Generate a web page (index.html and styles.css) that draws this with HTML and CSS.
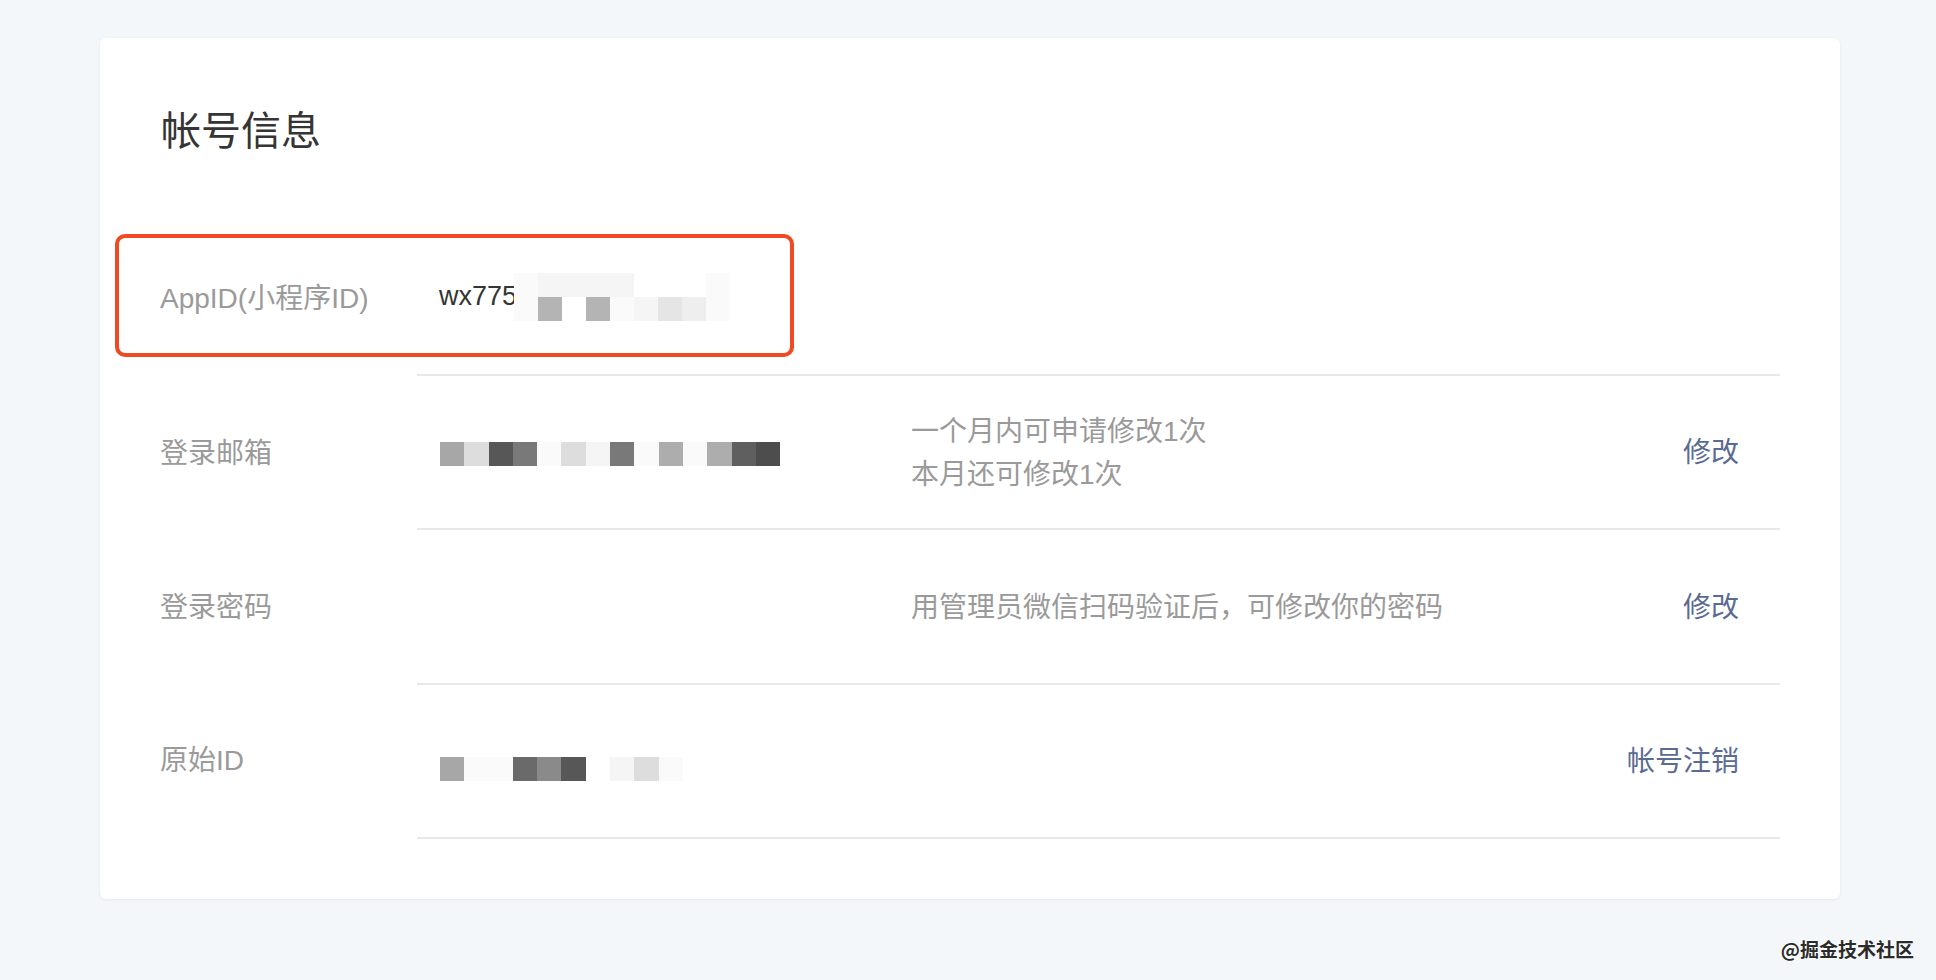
FILE: index.html
```html
<!DOCTYPE html>
<html lang="zh-CN">
<head>
<meta charset="utf-8">
<title>帐号信息</title>
<link rel="stylesheet" href="styles.css">
</head>
<body>
<div class="card">
  <h1 class="title">帐号信息</h1>

  <div class="row">
    <div class="label">AppID(小程序ID)</div>
    <div class="main">
      <div class="value appid">
        <span class="appid-text">wx775</span>
        <span class="mosaic m9">
          <i class="k14"></i><i class="k13"></i><i class="k13"></i><i class="k13"></i><i class="k13"></i><i class="k15"></i><i class="k15"></i><i class="k15"></i><i class="k14"></i>
          <i class="k14"></i><i class="k9"></i><i class="k15"></i><i class="k9"></i><i class="k14"></i><i class="k13"></i><i class="k11"></i><i class="k12"></i><i class="k14"></i>
        </span>
      </div>
    </div>
  </div>

  <div class="row">
    <div class="label">登录邮箱</div>
    <div class="main">
      <div class="value">
        <span class="mosaic m14">
          <i class="k7"></i><i class="k10"></i><i class="k2"></i><i class="k5"></i><i class="k14"></i><i class="k10"></i><i class="k13"></i><i class="k5"></i><i class="k14"></i><i class="k8"></i><i class="k14"></i><i class="k8"></i><i class="k3"></i><i class="k1"></i>
        </span>
      </div>
      <div class="desc">一个月内可申请修改1次<br>本月还可修改1次</div>
      <a class="action" href="#">修改</a>
    </div>
  </div>

  <div class="row">
    <div class="label">登录密码</div>
    <div class="main">
      <div class="value"></div>
      <div class="desc">用管理员微信扫码验证后，可修改你的密码</div>
      <a class="action" href="#">修改</a>
    </div>
  </div>

  <div class="row">
    <div class="label label-id">原始ID</div>
    <div class="main">
      <div class="value">
        <span class="mosaic m10 low">
          <i class="k7"></i><i class="k14"></i><i class="k14"></i><i class="k4"></i><i class="k6"></i><i class="k2"></i><i class="k15"></i><i class="k13"></i><i class="k10"></i><i class="k14"></i>
        </span>
      </div>
      <div class="desc"></div>
      <a class="action" href="#">帐号注销</a>
    </div>
  </div>

  <div class="highlight"></div>
</div>

<div class="watermark">@掘金技术社区</div>
</body>
</html>
```

FILE: styles.css
```css
html, body {
  margin: 0;
  padding: 0;
}

body {
  background: #f4f7fa;
  font-family: "Liberation Sans", "Noto Sans CJK SC", sans-serif;
  color: #353535;
  width: 1936px;
  height: 980px;
  position: relative;
  overflow: hidden;
}

.card {
  position: relative;
  box-sizing: border-box;
  margin: 38px 0 0 100px;
  width: 1740px;
  padding: 65px 60px 60px 60px;
  background: #ffffff;
  border-radius: 6px;
  box-shadow: 0 1px 3px rgba(40, 60, 90, 0.08);
}

.title {
  margin: 0 0 62px 1px;
  font-size: 40px;
  line-height: 56px;
  font-weight: normal;
  color: #353535;
}

.row {
  display: flex;
  height: 154.5px;
}

.label {
  width: 257px;
  flex: none;
  display: flex;
  align-items: center;
  box-sizing: border-box;
  padding-bottom: 4px;
  font-size: 28px;
  color: #9a9a9a;
}

.label-id {
  padding-bottom: 7px;
}

.main {
  flex: 1;
  display: flex;
  align-items: center;
  box-sizing: border-box;
  padding: 0 41px 0 22px;
  border-bottom: 2px solid #e8e8ea;
}

.value {
  width: 474px;
  flex: none;
  display: flex;
  align-items: center;
  font-size: 27px;
  color: #353535;
}

.appid-text {
  line-height: 40px;
  padding-bottom: 2px;
}

.desc {
  flex: 1;
  font-size: 28px;
  line-height: 43px;
  padding-top: 3px;
  margin-left: -2px;
  color: #9a9a9a;
}

.action {
  font-size: 28px;
  padding-bottom: 3px;
  color: #5a6b93;
  text-decoration: none;
}

.mosaic {
  display: grid;
  grid-auto-rows: 24px;
}

.mosaic i {
  display: block;
}

.m9 {
  grid-template-columns: repeat(9, 24px);
  margin-left: -3px;
  margin-top: -1px;
}

.m14 {
  grid-template-columns: repeat(14, 24.3px);
  margin-left: 1px;
  margin-top: 5px;
}

.m10 {
  grid-template-columns: repeat(10, 24.3px);
  margin-left: 1px;
}

.low {
  margin-top: 16px;
}

.k1 { background: #4d4d4d; }
.k2 { background: #575757; }
.k3 { background: #5f5f5f; }
.k4 { background: #6a6a6a; }
.k5 { background: #797979; }
.k6 { background: #8a8a8a; }
.k7 { background: #a7a7a7; }
.k8 { background: #adadad; }
.k9 { background: #b4b4b4; }
.k10 { background: #dddddd; }
.k11 { background: #e5e5e5; }
.k12 { background: #eeeeee; }
.k13 { background: #f5f5f5; }
.k14 { background: #fafafa; }
.k15 { background: #ffffff; }

.highlight {
  position: absolute;
  left: 15px;
  top: 196px;
  width: 679px;
  height: 123px;
  box-sizing: border-box;
  border: 4px solid #f04a22;
  border-radius: 10px;
}

.watermark {
  position: absolute;
  right: 22px;
  top: 936px;
  font-size: 19px;
  line-height: 26px;
  font-weight: bold;
  font-family: "Noto Sans CJK SC", sans-serif;
  color: #2b2b2b;
  text-shadow: 0 0 2px #ffffff, 0 0 2px #ffffff;
}
```
